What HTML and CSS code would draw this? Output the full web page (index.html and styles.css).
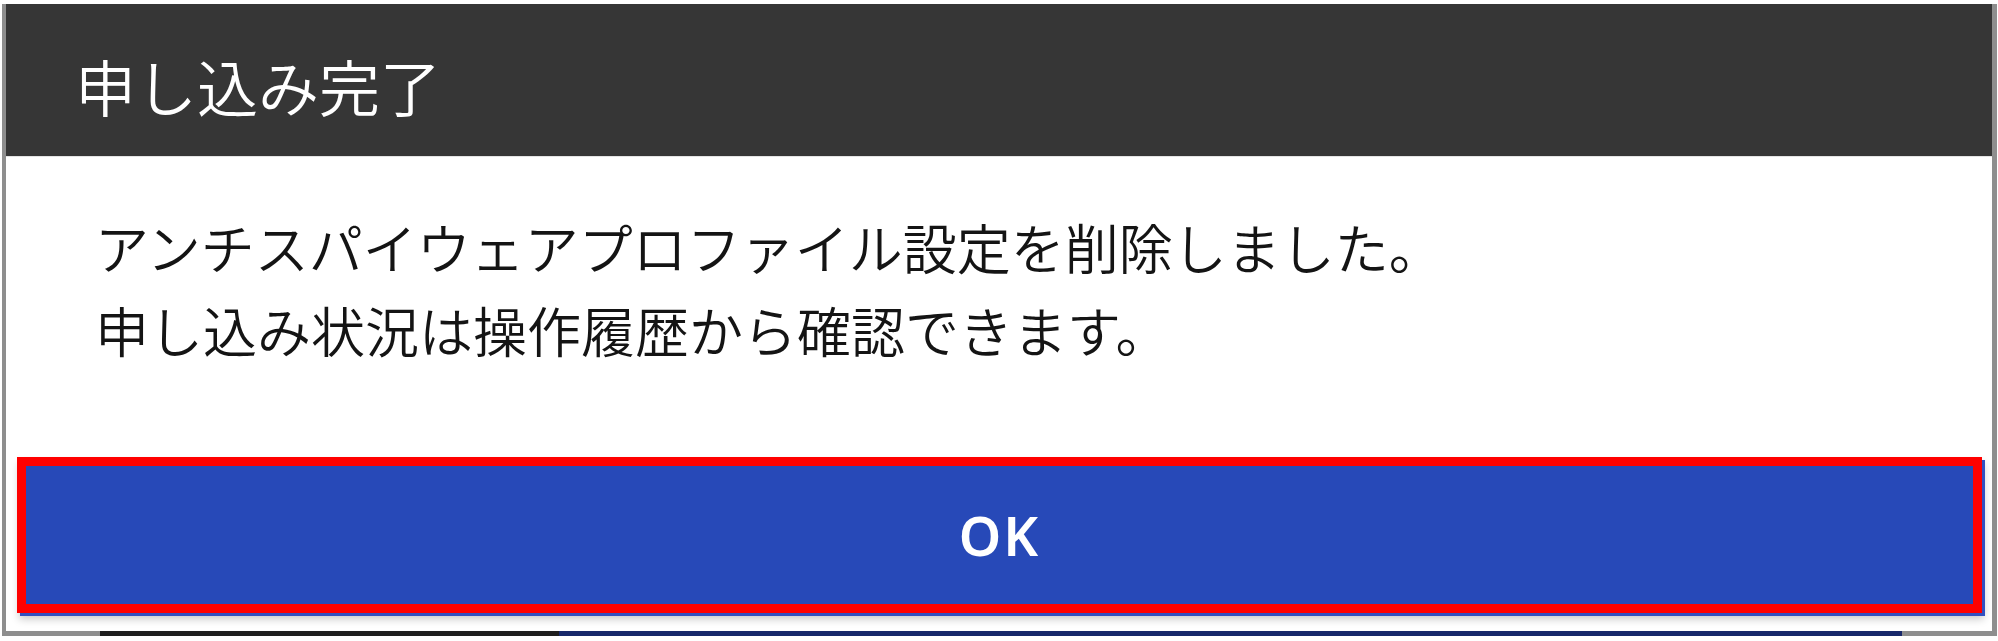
FILE: index.html
```html
<!DOCTYPE html>
<html lang="ja">
<head>
  <meta charset="UTF-8">
  <title>申し込み完了</title>
  <link rel="stylesheet" href="styles.css">
</head>
<body>

  <div class="dialog">
    <div class="dialog-header">
      <h2>申し込み完了</h2>
    </div>

    <div class="dialog-body">
      <p class="message">
        アンチスパイウェアプロファイル設定を削除しました。<br>
        申し込み状況は操作履歴から確認できます。
      </p>

      <button class="ok-button">OK</button>
    </div>

    <div class="backdrop-strip">
      <span class="strip-gap strip-left"></span>
      <span class="strip-dark"></span>
      <span class="strip-navy"></span>
      <span class="strip-gap"></span>
    </div>
  </div>

</body>
</html>
```

FILE: styles.css
```css
* {
  box-sizing: border-box;
  margin: 0;
  padding: 0;
}

body {
  background: #fff;
  font-family: "Noto Sans CJK JP", "Noto Sans", sans-serif;
  padding: 4px 1px 0 2px;
}

.dialog {
  border-left: 4px solid #8e8e8e;
  border-right: 5px solid #8e8e8e;
  background: #fff;
}

.dialog-header {
  background: #363636;
  height: 153px;
  display: flex;
  align-items: center;
  padding: 10px 0 0 69px;
  border-bottom: 1px solid #e4e4e4;
}

.dialog-header h2 {
  color: #fff;
  font-size: 61px;
  font-weight: 350;
  line-height: 1;
}

.dialog-body {
  height: 474px;
  padding: 48px 10px 0 11px;
}

.message {
  font-size: 54px;
  font-weight: 350;
  line-height: 83px;
  color: #141414;
  padding-left: 78px;
}

.ok-button {
  display: block;
  width: 100%;
  height: 156px;
  margin-top: 86px;
  background: #2749b8;
  border: 9px solid #ff0000;
  color: #fff;
  font-family: "Noto Sans", sans-serif;
  font-size: 54px;
  font-weight: 600;
  letter-spacing: 2px;
  box-shadow: 3px 3px 0 #3350c0, 2px 6px 8px rgba(0, 0, 0, 0.22);
}

.backdrop-strip {
  display: flex;
  height: 5px;
  margin-left: -4px;
  margin-right: -5px;
}

.strip-gap {
  flex: 1;
  background: #8e8e8e;
}

.strip-left {
  flex: 0 0 98px;
}

.strip-dark {
  flex: 0 0 459px;
  background: #1e1e1e;
}

.strip-navy {
  flex: 0 0 1343px;
  background: #17286a;
}
```
